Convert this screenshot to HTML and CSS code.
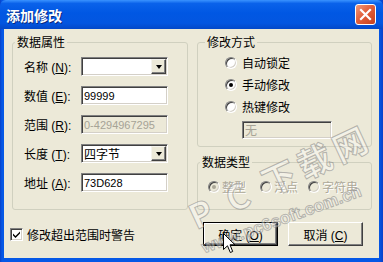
FILE: index.html
```html
<!DOCTYPE html>
<html lang="zh-CN">

<head>
    <meta charset="UTF-8">
    <meta name="viewport" content="width=device-width, initial-scale=1.0">
    <title>添加修改</title>
    <link rel="stylesheet" href="styles.css">
</head>

<body>
    <div class="window">
        <div class="titlebar">
            <span class="title">添加修改</span>
            <span class="close">
                <svg width="13" height="13" viewBox="0 0 13 13">
                    <path d="M2 2 L11 11 M11 2 L2 11" stroke="#fff" stroke-width="2.2" stroke-linecap="square" />
                </svg>
            </span>
        </div>

        <div class="client">
            <div class="panels">
                <fieldset class="group group-data">
                    <legend>数据属性</legend>
                    <div class="row">
                        <span class="label">名称 (<u>N</u>):</span>
                        <div class="field combo">
                            <span class="value"></span>
                            <span class="drop"><span class="arrow"></span></span>
                        </div>
                    </div>
                    <div class="row">
                        <span class="label">数值 (<u>E</u>):</span>
                        <div class="field"><span class="value">99999</span></div>
                    </div>
                    <div class="row">
                        <span class="label">范围 (<u>R</u>):</span>
                        <div class="field disabled"><span class="value">0-4294967295</span></div>
                    </div>
                    <div class="row">
                        <span class="label">长度 (<u>T</u>):</span>
                        <div class="field combo">
                            <span class="value cjk">四字节</span>
                            <span class="drop"><span class="arrow"></span></span>
                        </div>
                    </div>
                    <div class="row">
                        <span class="label">地址 (<u>A</u>):</span>
                        <div class="field"><span class="value">73D628</span></div>
                    </div>
                </fieldset>

                <div class="side">
                    <fieldset class="group group-mode">
                        <legend>修改方式</legend>
                        <div class="option"><span class="radio"></span>自动锁定</div>
                        <div class="option"><span class="radio checked"></span>手动修改</div>
                        <div class="option"><span class="radio"></span>热键修改</div>
                        <div class="field disabled hotkey"><span class="value cjk">无</span></div>
                    </fieldset>

                    <fieldset class="group group-type">
                        <legend>数据类型</legend>
                        <div class="types">
                            <div class="option off"><span class="radio checked"></span>整型</div>
                            <div class="option off"><span class="radio"></span>浮点</div>
                            <div class="option off"><span class="radio"></span>字符串</div>
                        </div>
                    </fieldset>
                </div>
            </div>

            <div class="footer">
                <div class="check">
                    <span class="checkbox">
                        <svg width="9" height="9" viewBox="0 0 9 9">
                            <path d="M1 3.5 L3.5 6 L8 1.5 L8 3.5 L3.5 8 L1 5.5 Z" fill="#000" />
                        </svg>
                    </span>
                    修改超出范围时警告
                </div>
                <div class="buttons">
                    <button class="btn default">确定 (<u>O</u>)</button>
                    <button class="btn">取消 (<u>C</u>)</button>
                </div>
            </div>
        </div>

        <!-- watermark and mouse pointer lie over the dialog -->
        <div class="watermark">
            <div class="wm-big">P C 下载网</div>
            <div class="wm-url">www.pc6soft.com.cn</div>
        </div>
        <svg class="cursor" width="13" height="21" viewBox="0 0 13 21">
            <path d="M0.5 0.5 L0.5 16.5 L4.5 12.8 L7.3 19.5 L9.7 18.5 L7 11.8 L12 11.8 Z" fill="#fff" stroke="#000" stroke-width="1" />
        </svg>
    </div>
</body>

</html>
```

FILE: styles.css
```css
* {
    box-sizing: border-box;
}

body {
    margin: 0;
    font-family: "Liberation Sans", "Noto Sans CJK SC", sans-serif;
    font-size: 12px;
    color: #000;
}

.window {
    position: relative;
    width: 383px;
    height: 262px;
    display: flex;
    flex-direction: column;
    background: linear-gradient(to right, #0840c8, #0558e6 2px, #0558e6 379px, #0840c8);
    overflow: hidden;
}

/* Title bar */
.titlebar {
    height: 29px;
    display: flex;
    align-items: center;
    justify-content: space-between;
    padding: 0 6px 0 6px;
    background: linear-gradient(#3a93ff, #0a62ea 12%, #0057e3 45%, #0356e0 80%, #0348c8);
    border-radius: 6px 6px 0 0;
}

.title {
    color: #fff;
    font-family: "Noto Sans CJK SC", sans-serif;
    font-weight: 700;
    font-size: 14px;
    line-height: 16px;
    text-shadow: 1px 1px #0a2a80;
    margin-top: 1px;
}

.close {
    width: 21px;
    height: 21px;
    display: flex;
    align-items: center;
    justify-content: center;
    border: 1px solid #fff;
    border-radius: 3px;
    background: linear-gradient(135deg, #f09a7c, #e2603c 45%, #c7401c);
    margin-right: 1px;
}

/* Client area */
.client {
    flex: 1;
    margin: 0 4px 4px 4px;
    padding: 5px 7px 12px 8px;
    background: #ece9d8;
}

.panels {
    display: grid;
    grid-template-columns: 176px 175px;
    column-gap: 9px;
}

.group {
    margin: 0;
    min-width: 0;
    border: 1px solid #d0d0bf;
    border-radius: 3px;
}

.group legend {
    font-family: "Noto Sans CJK SC", sans-serif;
    line-height: 16px;
    padding: 0 2px;
}

.group-data {
    padding: 7px 7px 17px 11px;
}

.group-data legend {
    margin-left: -9px;
}

.row {
    display: flex;
    align-items: center;
    height: 19px;
    margin-bottom: 10px;
}

.row:last-child {
    margin-bottom: 0;
}

.label {
    width: 57px;
    white-space: nowrap;
}

/* Sunken edit box */
.field {
    width: 87px;
    height: 19px;
    display: flex;
    align-items: center;
    background: #fff;
    border: 1px solid;
    border-color: #808080 #fff #fff #808080;
    box-shadow: inset 1px 1px #404040, inset -1px -1px #d4d0c8;
}

.value {
    flex: 1;
    padding-left: 2px;
    font-size: 11px;
    line-height: 14px;
}

.value.cjk {
    font-family: "Noto Sans CJK SC", sans-serif;
    font-size: 12px;
}

.field.disabled {
    background: #ece9d8;
    color: #a6a396;
}

.drop {
    width: 15px;
    height: 15px;
    margin-right: 1px;
    display: flex;
    align-items: center;
    justify-content: center;
    background: #ece9d8;
    border: 1px solid;
    border-color: #f4f3ee #404040 #404040 #f4f3ee;
    box-shadow: inset -1px -1px #808080;
}

.arrow {
    width: 0;
    height: 0;
    border-left: 3.5px solid transparent;
    border-right: 3.5px solid transparent;
    border-top: 4px solid #000;
}

/* Right side groups */
.side {
    display: flex;
    flex-direction: column;
    gap: 7px;
}

.group-mode {
    padding: 5px 10px 7px 27px;
}

.group-mode legend {
    margin-left: -20px;
}

.option {
    display: flex;
    align-items: center;
    gap: 5px;
    height: 16px;
    margin-bottom: 6px;
    font-family: "Noto Sans CJK SC", sans-serif;
    line-height: 16px;
    white-space: nowrap;
}

.radio {
    position: relative;
    width: 12px;
    height: 12px;
    flex: none;
    border-radius: 50%;
    background: #fff;
    border: 1px solid;
    border-color: #808080 #fff #fff #808080;
    box-shadow: inset 1px 1px #404040, inset -1px -1px #d4d0c8;
}

.radio.checked::after {
    content: "";
    position: absolute;
    left: 3px;
    top: 3px;
    width: 4px;
    height: 4px;
    border-radius: 50%;
    background: #000;
}

.hotkey {
    width: 90px;
    height: 18px;
    margin: 4px 0 0 17px;
}

.group-type {
    flex: 1;
    padding: 9px 6px 0 10px;
}

.group-type legend {
    margin-left: -8px;
}

.types {
    display: grid;
    grid-template-columns: 52px 48px auto;
}

.option.off {
    gap: 2px;
    color: #aca899;
    text-shadow: 1px 1px #fff;
}

.option.off .radio {
    background: #ece9d8;
}

.option.off .radio.checked::after {
    background: #aca899;
}

/* Footer */
.footer {
    display: grid;
    grid-template-columns: 176px 175px;
    column-gap: 9px;
    margin-top: 12px;
}

.check {
    display: flex;
    align-items: center;
    gap: 4px;
    height: 16px;
    margin: 4px 0 0 -2px;
    font-family: "Noto Sans CJK SC", sans-serif;
    white-space: nowrap;
}

.checkbox {
    width: 13px;
    height: 13px;
    display: flex;
    align-items: center;
    justify-content: center;
    background: #fff;
    border: 1px solid;
    border-color: #808080 #fff #fff #808080;
    box-shadow: inset 1px 1px #404040, inset -1px -1px #d4d0c8;
}

.buttons {
    display: flex;
    gap: 10px;
    padding-left: 6px;
}

.btn {
    width: 75px;
    height: 24px;
    padding: 0;
    font-family: "Liberation Sans", "Noto Sans CJK SC", sans-serif;
    font-size: 12px;
    color: #000;
    background: #ece9d8;
    border: 1px solid;
    border-color: #fff #404040 #404040 #fff;
    box-shadow: inset -1px -1px #808080;
}

.btn.default {
    border: 1px solid #000;
    box-shadow: inset -1px -1px #404040, inset 1px 1px #fff, inset -2px -2px #808080;
}

/* Overlays */
.watermark {
    position: absolute;
    inset: 0;
    pointer-events: none;
    color: rgba(255, 255, 255, 0.4);
    -webkit-text-stroke: 1px rgba(120, 120, 120, 0.5);
    font-family: "Noto Sans CJK SC", sans-serif;
    font-weight: 700;
}

.wm-big {
    position: absolute;
    left: 198px;
    top: 198px;
    font-size: 34px;
    line-height: 36px;
    letter-spacing: 5px;
    white-space: nowrap;
    transform: rotate(-25deg);
    transform-origin: 0 100%;
}

.wm-url {
    position: absolute;
    left: 206px;
    top: 238px;
    font-family: "Liberation Sans", sans-serif;
    font-size: 17px;
    line-height: 20px;
    white-space: nowrap;
    transform: rotate(-20deg);
    transform-origin: 0 100%;
}

.cursor {
    position: absolute;
    left: 223px;
    top: 233px;
}
```
